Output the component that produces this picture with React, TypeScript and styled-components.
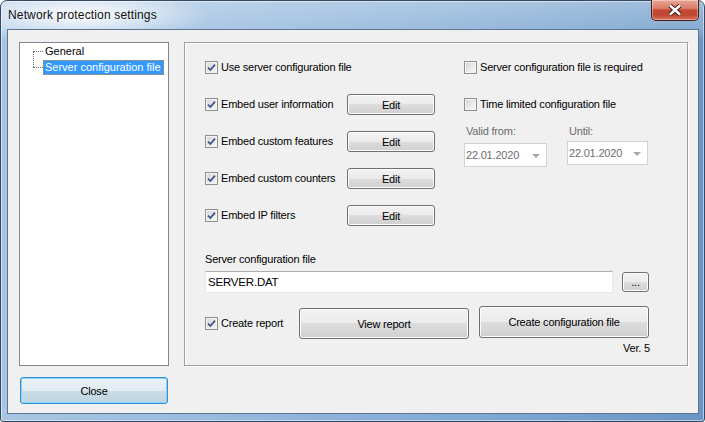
import React from 'react';
import styled, { createGlobalStyle } from 'styled-components';

const GlobalStyle = createGlobalStyle`
  html, body {
    margin: 0;
    padding: 0;
  }
  body {
    width: 705px;
    height: 422px;
    overflow: hidden;
    background: #fff;
    font-family: "Liberation Sans", Arial, sans-serif;
    font-size: 11px;
    letter-spacing: -0.2px;
    color: #000;
  }
`;

// Win7 window frame
const Window = styled.div`
  box-sizing: border-box;
  width: 705px;
  height: 422px;
  display: flex;
  flex-direction: column;
  border: 1px solid #34495f;
  border-radius: 7px 7px 3px 3px;
  padding: 0 5px 7px 6px;
  background:
    radial-gradient(ellipse 130px 26px at 80px 14px, rgba(255, 255, 255, 0.95), rgba(255, 255, 255, 0) 100%),
    linear-gradient(rgba(255, 255, 255, 0.35) 0px, rgba(255, 255, 255, 0.2) 28px, rgba(255, 255, 255, 0) 40px),
    linear-gradient(to right, #a8c6e4 0%, #94b8dd 35%, #7ea8d2 70%, #6796c6 100%);
  box-shadow: inset 0 0 0 1px rgba(255, 255, 255, 0.5);
`;

const TitleBar = styled.div`
  height: 28px;
  flex-shrink: 0;
  display: flex;
  justify-content: space-between;
  align-items: flex-start;
`;

const Title = styled.div`
  font-size: 12px;
  letter-spacing: 0.15px;
  line-height: 28px;
  padding-left: 1px;
  color: #111;
`;

const CloseX = styled.div`
  width: 48px;
  height: 21px;
  margin-top: -1px;
  box-sizing: border-box;
  border: 1px solid #4a1f1a;
  border-top: none;
  border-radius: 0 0 5px 5px;
  background: linear-gradient(#eaa797 0%, #d97b68 42%, #c44934 50%, #bf4632 75%, #d8735c 100%);
  box-shadow: inset 0 0 0 1px rgba(255, 255, 255, 0.35);
  display: flex;
  align-items: center;
  justify-content: center;
`;

const Client = styled.div`
  flex: 1;
  box-sizing: border-box;
  border: 1px solid #5d7590;
  background: #f0f0f0;
  padding: 12px 0 0 11px;
  display: flex;
  flex-direction: column;
`;

const MainRow = styled.div`
  height: 324px;
  display: flex;
  gap: 15px;
`;

// left tree
const Tree = styled.div`
  box-sizing: border-box;
  width: 150px;
  height: 100%;
  border: 1px solid #828790;
  background: #fff;
`;

const TreeNode = styled.div<{ $connectUp?: boolean }>`
  position: relative;
  height: 16px;
  padding-left: 23px;
  display: flex;
  align-items: center;

  &::before {
    content: '';
    position: absolute;
    left: 13px;
    top: 8px;
    width: 10px;
    border-top: 1px dotted #6f6f6f;
  }

  &::after {
    content: '';
    display: ${p => (p.$connectUp ? 'block' : 'none')};
    position: absolute;
    left: 13px;
    top: -8px;
    height: 16px;
    border-left: 1px dotted #6f6f6f;
  }
`;

const TreeLabel = styled.span<{ $selected?: boolean }>`
  box-sizing: border-box;
  height: 15px;
  line-height: 13px;
  padding: 0 2px 0 1px;
  border: 1px ${p => (p.$selected ? 'dotted #d08a34' : 'solid transparent')};
  background: ${p => (p.$selected ? '#3399ff' : 'transparent')};
  color: ${p => (p.$selected ? '#fff' : '#000')};
  letter-spacing: 0;
  white-space: nowrap;
`;

// right group box
const GroupBox = styled.div`
  box-sizing: border-box;
  width: 504px;
  height: 100%;
  border: 1px solid #a0a0a0;
  box-shadow: inset 1px 1px 0 #fff, 1px 1px 0 #fff;
  padding: 14px 37px 0 20px;
  display: flex;
  flex-direction: column;
`;

const TopArea = styled.div`
  display: flex;
`;

const LeftCol = styled.div`
  width: 259px;
  display: flex;
  flex-direction: column;
  gap: 16px;
`;

const RightCol = styled.div`
  flex: 1;
  display: flex;
  flex-direction: column;
  gap: 16px;
`;

const Row = styled.div`
  height: 21px;
  display: flex;
  align-items: center;
`;

const CheckLabel = styled.label<{ $width?: number; $top?: number }>`
  display: flex;
  align-items: center;
  gap: 3px;
  width: ${p => (p.$width ? `${p.$width}px` : 'auto')};
  margin-top: ${p => p.$top ?? 0}px;
  line-height: 13px;
  white-space: nowrap;
`;

const Box = styled.span`
  box-sizing: border-box;
  width: 13px;
  height: 13px;
  flex-shrink: 0;
  border: 1px solid #8e8f8f;
  background: linear-gradient(135deg, #cfd2d6 0%, #e9eaeb 55%, #f7f7f7 100%);
  box-shadow: inset 0 0 0 1px #f4f4f4;
  display: flex;
  align-items: center;
  justify-content: center;
`;

const Button = styled.div<{ $w: number; $h: number; $top?: number; $left?: number }>`
  box-sizing: border-box;
  width: ${p => p.$w}px;
  height: ${p => p.$h}px;
  margin-top: ${p => p.$top ?? 0}px;
  margin-left: ${p => p.$left ?? 0}px;
  flex-shrink: 0;
  border: 1px solid #707070;
  border-radius: 3px;
  background: linear-gradient(#f2f2f2 0%, #ebebeb 50%, #dddddd 50%, #cfcfcf 100%);
  box-shadow: inset 0 0 0 1px #fcfcfc;
  display: flex;
  align-items: center;
  justify-content: center;
  white-space: nowrap;
`;

const DateArea = styled.div`
  margin-top: -6px;
  display: flex;
  gap: 20px;
`;

const DateField = styled.div`
  display: flex;
  flex-direction: column;
`;

const DisabledLabel = styled.div`
  color: #6d6d6d;
  line-height: 13px;
  padding-left: 2px;
`;

const DatePicker = styled.div<{ $w: number; $top: number }>`
  box-sizing: border-box;
  width: ${p => p.$w}px;
  height: 24px;
  margin-top: ${p => p.$top}px;
  border: 1px solid #d3d3d3;
  background: #fff;
  color: #6d6d6d;
  padding: 0 6px 0 1px;
  display: flex;
  align-items: center;
  justify-content: space-between;
`;

const Arrow = styled.span`
  width: 0;
  height: 0;
  border-left: 4px solid transparent;
  border-right: 4px solid transparent;
  border-top: 4px solid #a8a8a8;
  margin-top: 2px;
`;

const SectionLabel = styled.div`
  margin-top: 27px;
  line-height: 13px;
`;

const FileRow = styled.div`
  margin-top: 5px;
  display: flex;
  align-items: flex-start;
  gap: 9px;
`;

const TextInput = styled.div`
  box-sizing: border-box;
  width: 408px;
  height: 22px;
  border: 1px solid #e3e9ef;
  border-top-color: #abadb3;
  background: #fff;
  padding-left: 2px;
  display: flex;
  align-items: center;
  font-size: 11.5px;
`;

const ReportRow = styled.div`
  margin-top: 13px;
  display: flex;
  align-items: flex-start;
`;

const Version = styled.div`
  margin-top: 3px;
  line-height: 13px;
  text-align: right;
`;

const Footer = styled.div`
  margin-top: 11px;
  padding-left: 1px;
`;

const DefaultButton = styled.div`
  box-sizing: border-box;
  width: 148px;
  height: 27px;
  border: 1px solid #2a8fd8;
  border-radius: 3px;
  background: linear-gradient(#edf4f8 0%, #e0eaf0 50%, #cbdde7 50%, #bfd5e1 100%);
  box-shadow: inset 0 0 0 1px #8fd6f6;
  display: flex;
  align-items: center;
  justify-content: center;
`;

const Check = ({ checked, label, width, top }: { checked?: boolean; label: string; width?: number; top?: number }) => (
  <CheckLabel $width={width} $top={top}>
    <Box>
      {checked && (
        <svg width="9" height="9" viewBox="0 0 9 9">
          <path d="M1 4.6 L3.4 7 L8 1.6" fill="none" stroke="#41558a" strokeWidth="1.8" />
        </svg>
      )}
    </Box>
    {label}
  </CheckLabel>
);

const embedRows = [
  'Embed user information',
  'Embed custom features',
  'Embed custom counters',
  'Embed IP filters',
];

export default function App() {
  return (
    <>
      <GlobalStyle />
      <Window>
        <TitleBar>
          <Title>Network protection settings</Title>
          <CloseX>
            <svg width="14" height="12" viewBox="0 0 14 12">
              <path d="M2 1.5 L12 10.5 M12 1.5 L2 10.5" stroke="#3a1713" strokeWidth="4.4" />
              <path d="M2 1.5 L12 10.5 M12 1.5 L2 10.5" stroke="#fff" strokeWidth="2.4" />
            </svg>
          </CloseX>
        </TitleBar>
        <Client>
          <MainRow>
            <Tree>
              <TreeNode>
                <TreeLabel>General</TreeLabel>
              </TreeNode>
              <TreeNode $connectUp>
                <TreeLabel $selected>Server configuration file</TreeLabel>
              </TreeNode>
            </Tree>
            <GroupBox>
              <TopArea>
                <LeftCol>
                  <Row>
                    <Check checked label="Use server configuration file" />
                  </Row>
                  {embedRows.map(r => (
                    <Row key={r}>
                      <Check checked label={r} width={142} />
                      <Button $w={88} $h={21}>Edit</Button>
                    </Row>
                  ))}
                </LeftCol>
                <RightCol>
                  <Row>
                    <Check label="Server configuration file is required" />
                  </Row>
                  <Row>
                    <Check label="Time limited configuration file" />
                  </Row>
                  <DateArea>
                    <DateField>
                      <DisabledLabel>Valid from:</DisabledLabel>
                      <DatePicker $w={83} $top={5}>
                        22.01.2020
                        <Arrow />
                      </DatePicker>
                    </DateField>
                    <DateField>
                      <DisabledLabel>Until:</DisabledLabel>
                      <DatePicker $w={81} $top={3}>
                        22.01.2020
                        <Arrow />
                      </DatePicker>
                    </DateField>
                  </DateArea>
                </RightCol>
              </TopArea>
              <SectionLabel>Server configuration file</SectionLabel>
              <FileRow>
                <TextInput>SERVER.DAT</TextInput>
                <Button $w={27} $h={20} $top={1}>...</Button>
              </FileRow>
              <ReportRow>
                <Check checked label="Create report" width={94} top={11} />
                <Button $w={170} $h={31} $top={2}>View report</Button>
                <Button $w={170} $h={32} $left={10}>Create configuration file</Button>
              </ReportRow>
              <Version>Ver. 5</Version>
            </GroupBox>
          </MainRow>
          <Footer>
            <DefaultButton>Close</DefaultButton>
          </Footer>
        </Client>
      </Window>
    </>
  );
}
